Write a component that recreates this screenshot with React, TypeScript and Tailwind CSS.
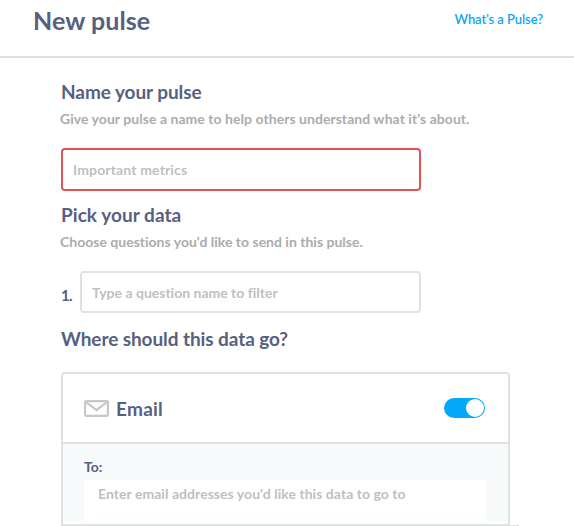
function Heading({ children, className = '' }: { children: string; className?: string }) {
  return (
    <h2 className={`whitespace-nowrap text-[19px] leading-6 font-bold text-[#57607f] ${className}`}>
      {children}
    </h2>
  );
}

function Hint({ children, className = '' }: { children: string; className?: string }) {
  return (
    <p className={`mt-[5px] -ml-px h-5 whitespace-nowrap text-[14px] leading-5 font-bold text-[#acacac] ${className}`}>
      {children}
    </p>
  );
}

function Envelope() {
  return (
    <svg width="25" height="17" viewBox="0 0 25 17" fill="none" stroke="#c7c7c7" strokeWidth="2.2">
      <rect x="1.1" y="1.1" width="22.8" height="14.8" rx="1" />
      <path d="M2 2 12.5 10.2 23 2" />
    </svg>
  );
}

export default function App() {
  return (
    <div className="h-[526px] w-[574px] overflow-hidden bg-white font-['Lato',sans-serif] text-[#57607f]">
      <header className="flex h-[58px] items-start justify-between border-b-2 border-[#dde3e2] pr-[31px] pl-[33px]">
        <h1 className="mt-1 text-[25px] leading-8 font-bold tracking-[0.08px] whitespace-nowrap">New pulse</h1>
        <a className="mt-[9px] text-[13px] leading-5 font-semibold tracking-[-0.08px] whitespace-nowrap text-[#0ea5f3]">
          What's a Pulse?
        </a>
      </header>

      <main className="pl-[61px]">
        <section className="h-[133px] pt-[22px]">
          <Heading className="tracking-[-0.07px]">Name your pulse</Heading>
          <Hint className="tracking-[0.045px]">Give your pulse a name to help others understand what it's about.</Hint>
          <input
            className="mt-[19px] block h-[43px] w-[360px] rounded-[4px] border-2 border-[#df5453] px-[10px] text-[14px] font-bold tracking-[0.15px] outline-none placeholder:text-[#bfbfbf] placeholder:opacity-100"
            placeholder="Important metrics"
          />
        </section>

        <section className="h-[122px] pt-[12px]">
          <Heading className="tracking-[0.04px]">Pick your data</Heading>
          <Hint className="tracking-[0.005px] [font-variant-ligatures:none]">Choose questions you'd like to send in this pulse.</Hint>
          <div className="mt-[19px] flex">
            <span className="w-[19px] pt-[14px] text-[15px] leading-5 font-bold tracking-[-0.7px]">1.</span>
            <input
              className="block h-[42px] w-[341px] rounded-[4px] border-2 border-[#dde3e2] px-[10px] text-[14px] font-bold [font-variant-ligatures:none] outline-none placeholder:text-[#bfbfbf] placeholder:opacity-100"
              placeholder="Type a question name to filter"
            />
          </div>
        </section>

        <section className="pt-[14px]">
          <Heading className="tracking-[-0.09px]">Where should this data go?</Heading>
          <div className="mt-[21px] h-[154px] w-[449px] rounded-t-[4px] border-2 border-[#dde3e2]">
            <div className="flex h-[70px] items-center border-b-2 border-[#dde3e2] pr-[23px] pl-[21px]">
              <Envelope />
              <Heading className="mt-px ml-[7px] tracking-[0.25px]">Email</Heading>
              <div className="ml-auto flex h-[20px] w-[41px] items-center justify-end rounded-full bg-[#05a8f7] pr-px">
                <div className="size-[18px] rounded-full bg-white" />
              </div>
            </div>
            <div className="h-[77px] bg-[#f7f9fb] px-[21px] pt-[13px]">
              <div className="h-[23px] text-[14px] leading-5 font-bold">To:</div>
              <input
                className="block h-[41px] w-[402px] bg-white px-[14px] pb-[14px] text-[14px] font-bold tracking-[0.045px] outline-none placeholder:text-[#bfbfbf] placeholder:opacity-100"
                placeholder="Enter email addresses you'd like this data to go to"
              />
            </div>
          </div>
          <div className="-mt-px ml-[449px] h-px w-[9px] bg-[#dde3e2]" />
        </section>
      </main>
    </div>
  );
}
